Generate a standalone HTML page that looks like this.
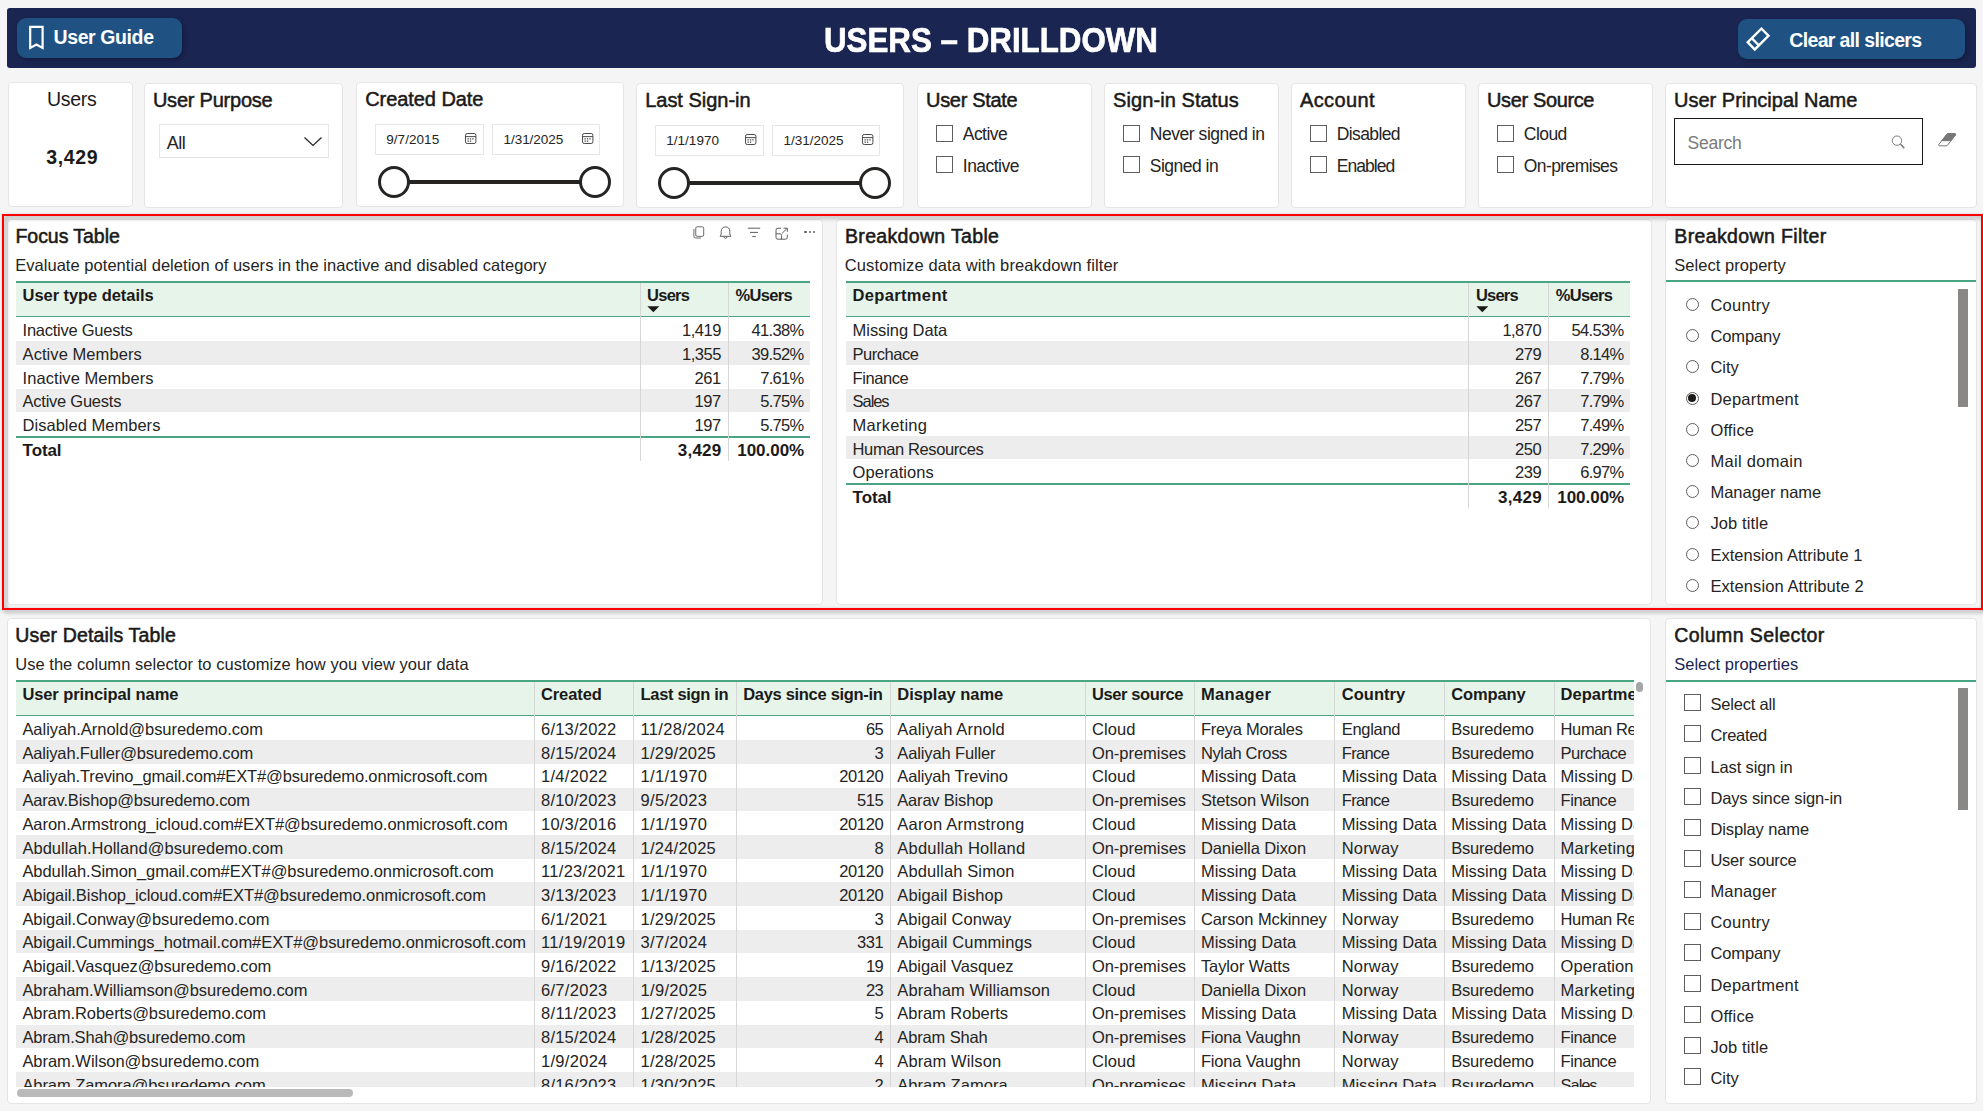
<!DOCTYPE html>
<html><head><meta charset="utf-8"><title>Users - Drilldown</title>
<style>
html,body{margin:0;padding:0;}
body{width:1983px;height:1111px;overflow:hidden;background:#f5f5f5;font-family:'Liberation Sans', sans-serif;position:relative;}
svg{position:absolute;overflow:visible;}
</style></head><body>
<div style="position:absolute;left:7px;top:8px;width:1969px;height:60px;background:#1a2552;border-radius:3px;"></div>
<div style="position:absolute;left:17px;top:18px;width:165px;height:40px;background:#1f5282;border-radius:9px;box-shadow:2px 2px 4px rgba(0,0,0,0.25);"></div>
<svg style="left:27px;top:24px" width="20" height="28" viewBox="0 0 20 28"><path d="M3.2 2.8 H15.6 V24 L9.4 20.6 L3.2 24 Z" fill="none" stroke="#fff" stroke-width="2.2" stroke-linejoin="miter"/></svg>
<div style="position:absolute;top:26px;font-size:19.5px;line-height:23.4px;font-weight:700;color:#fff;white-space:pre;letter-spacing:-0.394px;left:53.5px;">User Guide</div>
<div style="position:absolute;top:19px;font-size:35px;line-height:42.0px;font-weight:700;color:#fff;white-space:pre;letter-spacing:0.000px;left:490.80px;width:1000px;text-align:center;transform:scaleX(0.8946);transform-origin:center center;-webkit-text-stroke:0.7px #fff;">USERS – DRILLDOWN</div>
<div style="position:absolute;left:1738px;top:19px;width:226.5px;height:39.5px;background:#1f5282;border-radius:9px;box-shadow:2px 2px 4px rgba(0,0,0,0.25);"></div>
<svg style="left:0;top:0" width="1983" height="80"><g transform="translate(1758.1,39.05) rotate(45)" fill="none" stroke="#fff" stroke-width="2.4"><rect x="-5" y="-9.7" width="10" height="19.4"/><path d="M-5 3.9 H5"/></g></svg>
<div style="position:absolute;top:29px;font-size:19.5px;line-height:23.4px;font-weight:700;color:#fff;white-space:pre;letter-spacing:-0.632px;left:1789.2px;">Clear all slicers</div>
<div style="position:absolute;left:8px;top:82px;width:124.5px;height:124.5px;background:#fff;border:1px solid #e5e5e5;border-radius:4px;box-sizing:border-box;"></div>
<div style="position:absolute;top:88px;font-size:19.5px;line-height:23.4px;font-weight:400;color:#1b1a19;white-space:pre;letter-spacing:-0.280px;left:-428.24px;width:1000px;text-align:center;">Users</div>
<div style="position:absolute;top:146px;font-size:19.5px;line-height:23.4px;font-weight:700;color:#1b1a19;white-space:pre;letter-spacing:0.647px;left:-427.78px;width:1000px;text-align:center;">3,429</div>
<div style="position:absolute;left:144px;top:83px;width:199px;height:124.5px;background:#fff;border:1px solid #e5e5e5;border-radius:4px;box-sizing:border-box;"></div>
<div style="position:absolute;top:88px;font-size:20px;line-height:24.0px;font-weight:400;color:#1b1a19;white-space:pre;letter-spacing:-0.226px;left:152.9px;-webkit-text-stroke:0.5px #1b1a19;">User Purpose</div>
<div style="position:absolute;left:159px;top:124px;width:169.5px;height:33.5px;border:1px solid #e6e6e6;box-sizing:border-box;background:#fff;"></div>
<div style="position:absolute;top:133px;font-size:18px;line-height:21.6px;font-weight:400;color:#252423;white-space:pre;letter-spacing:-0.558px;left:166.8px;">All</div>
<svg style="left:303px;top:135px" width="20" height="12" viewBox="0 0 20 12"><path d="M1.5 2.5 L10 10.5 L18.5 2.5" fill="none" stroke="#252423" stroke-width="1.25"/></svg>
<div style="position:absolute;left:356px;top:82px;width:268px;height:124.5px;background:#fff;border:1px solid #e5e5e5;border-radius:4px;box-sizing:border-box;"></div>
<div style="position:absolute;top:87px;font-size:20px;line-height:24.0px;font-weight:400;color:#1b1a19;white-space:pre;letter-spacing:-0.061px;left:365.2px;-webkit-text-stroke:0.5px #1b1a19;">Created Date</div>
<div style="position:absolute;left:375px;top:123.5px;width:109px;height:31.5px;border:1px solid #e6e6e6;box-sizing:border-box;"></div>
<div style="position:absolute;left:492px;top:123.5px;width:108px;height:31.5px;border:1px solid #e6e6e6;box-sizing:border-box;"></div>
<div style="position:absolute;top:132px;font-size:13.5px;line-height:16.2px;font-weight:400;color:#252423;white-space:pre;letter-spacing:0.062px;left:386.2px;">9/7/2015</div>
<div style="position:absolute;top:132px;font-size:13.5px;line-height:16.2px;font-weight:400;color:#252423;white-space:pre;letter-spacing:-0.045px;left:503.5px;">1/31/2025</div>
<svg style="left:464.6px;top:133px" width="11.4" height="11" viewBox="0 0 11.4 11"><g fill="none" stroke="#4a4a4a" stroke-width="1"><rect x="0.5" y="0.5" width="10.4" height="10" rx="1.7"/><path d="M0.5 3.6 H10.9"/></g><g fill="#4a4a4a"><rect x="2.5" y="5.2" width="1.3" height="1.3"/><rect x="4.9" y="5.2" width="1.3" height="1.3"/><rect x="7.3" y="5.2" width="1.3" height="1.3"/><rect x="2.5" y="7.5" width="1.3" height="1.3"/><rect x="4.9" y="7.5" width="1.3" height="1.3"/></g></svg>
<svg style="left:581.8px;top:133px" width="11.4" height="11" viewBox="0 0 11.4 11"><g fill="none" stroke="#4a4a4a" stroke-width="1"><rect x="0.5" y="0.5" width="10.4" height="10" rx="1.7"/><path d="M0.5 3.6 H10.9"/></g><g fill="#4a4a4a"><rect x="2.5" y="5.2" width="1.3" height="1.3"/><rect x="4.9" y="5.2" width="1.3" height="1.3"/><rect x="7.3" y="5.2" width="1.3" height="1.3"/><rect x="2.5" y="7.5" width="1.3" height="1.3"/><rect x="4.9" y="7.5" width="1.3" height="1.3"/></g></svg>
<div style="position:absolute;left:393.8px;top:179.5px;width:201.2px;height:4px;background:#252423;"></div>
<div style="position:absolute;left:377.8px;top:165.5px;width:32px;height:32px;border:3.2px solid #252423;border-radius:50%;background:#fff;box-sizing:border-box;"></div>
<div style="position:absolute;left:579px;top:165.5px;width:32px;height:32px;border:3.2px solid #252423;border-radius:50%;background:#fff;box-sizing:border-box;"></div>
<div style="position:absolute;left:636px;top:83px;width:268px;height:124.5px;background:#fff;border:1px solid #e5e5e5;border-radius:4px;box-sizing:border-box;"></div>
<div style="position:absolute;top:88px;font-size:20px;line-height:24.0px;font-weight:400;color:#1b1a19;white-space:pre;letter-spacing:-0.020px;left:645.2px;-webkit-text-stroke:0.5px #1b1a19;">Last Sign-in</div>
<div style="position:absolute;left:655px;top:124.5px;width:109px;height:31.5px;border:1px solid #e6e6e6;box-sizing:border-box;"></div>
<div style="position:absolute;left:772px;top:124.5px;width:108px;height:31.5px;border:1px solid #e6e6e6;box-sizing:border-box;"></div>
<div style="position:absolute;top:133px;font-size:13.5px;line-height:16.2px;font-weight:400;color:#252423;white-space:pre;letter-spacing:0.034px;left:666.2px;">1/1/1970</div>
<div style="position:absolute;top:133px;font-size:13.5px;line-height:16.2px;font-weight:400;color:#252423;white-space:pre;letter-spacing:-0.008px;left:783.5px;">1/31/2025</div>
<svg style="left:744.6px;top:134px" width="11.4" height="11" viewBox="0 0 11.4 11"><g fill="none" stroke="#4a4a4a" stroke-width="1"><rect x="0.5" y="0.5" width="10.4" height="10" rx="1.7"/><path d="M0.5 3.6 H10.9"/></g><g fill="#4a4a4a"><rect x="2.5" y="5.2" width="1.3" height="1.3"/><rect x="4.9" y="5.2" width="1.3" height="1.3"/><rect x="7.3" y="5.2" width="1.3" height="1.3"/><rect x="2.5" y="7.5" width="1.3" height="1.3"/><rect x="4.9" y="7.5" width="1.3" height="1.3"/></g></svg>
<svg style="left:861.8px;top:134px" width="11.4" height="11" viewBox="0 0 11.4 11"><g fill="none" stroke="#4a4a4a" stroke-width="1"><rect x="0.5" y="0.5" width="10.4" height="10" rx="1.7"/><path d="M0.5 3.6 H10.9"/></g><g fill="#4a4a4a"><rect x="2.5" y="5.2" width="1.3" height="1.3"/><rect x="4.9" y="5.2" width="1.3" height="1.3"/><rect x="7.3" y="5.2" width="1.3" height="1.3"/><rect x="2.5" y="7.5" width="1.3" height="1.3"/><rect x="4.9" y="7.5" width="1.3" height="1.3"/></g></svg>
<div style="position:absolute;left:673.8px;top:180.5px;width:201.2px;height:4px;background:#252423;"></div>
<div style="position:absolute;left:657.8px;top:166.5px;width:32px;height:32px;border:3.2px solid #252423;border-radius:50%;background:#fff;box-sizing:border-box;"></div>
<div style="position:absolute;left:859px;top:166.5px;width:32px;height:32px;border:3.2px solid #252423;border-radius:50%;background:#fff;box-sizing:border-box;"></div>
<div style="position:absolute;left:917px;top:83px;width:174.5px;height:124.5px;background:#fff;border:1px solid #e5e5e5;border-radius:4px;box-sizing:border-box;"></div>
<div style="position:absolute;top:88px;font-size:20px;line-height:24.0px;font-weight:400;color:#1b1a19;white-space:pre;letter-spacing:-0.309px;left:926px;-webkit-text-stroke:0.5px #1b1a19;">User State</div>
<div style="position:absolute;left:935.5px;top:125px;width:17px;height:17px;border:1px solid #605e5c;box-sizing:border-box;background:#fff;"></div>
<div style="position:absolute;top:124px;font-size:17.5px;line-height:21.0px;font-weight:400;color:#252423;white-space:pre;letter-spacing:-0.551px;left:962.8px;">Active</div>
<div style="position:absolute;left:935.5px;top:156px;width:17px;height:17px;border:1px solid #605e5c;box-sizing:border-box;background:#fff;"></div>
<div style="position:absolute;top:156px;font-size:17.5px;line-height:21.0px;font-weight:400;color:#252423;white-space:pre;letter-spacing:-0.530px;left:962.8px;">Inactive</div>
<div style="position:absolute;left:1104px;top:83px;width:174.5px;height:124.5px;background:#fff;border:1px solid #e5e5e5;border-radius:4px;box-sizing:border-box;"></div>
<div style="position:absolute;top:88px;font-size:20px;line-height:24.0px;font-weight:400;color:#1b1a19;white-space:pre;letter-spacing:0.091px;left:1113px;-webkit-text-stroke:0.5px #1b1a19;">Sign-in Status</div>
<div style="position:absolute;left:1122.5px;top:125px;width:17px;height:17px;border:1px solid #605e5c;box-sizing:border-box;background:#fff;"></div>
<div style="position:absolute;top:124px;font-size:17.5px;line-height:21.0px;font-weight:400;color:#252423;white-space:pre;letter-spacing:-0.458px;left:1149.8px;">Never signed in</div>
<div style="position:absolute;left:1122.5px;top:156px;width:17px;height:17px;border:1px solid #605e5c;box-sizing:border-box;background:#fff;"></div>
<div style="position:absolute;top:156px;font-size:17.5px;line-height:21.0px;font-weight:400;color:#252423;white-space:pre;letter-spacing:-0.511px;left:1149.8px;">Signed in</div>
<div style="position:absolute;left:1291px;top:83px;width:174.5px;height:124.5px;background:#fff;border:1px solid #e5e5e5;border-radius:4px;box-sizing:border-box;"></div>
<div style="position:absolute;top:88px;font-size:20px;line-height:24.0px;font-weight:400;color:#1b1a19;white-space:pre;letter-spacing:0.372px;left:1300px;-webkit-text-stroke:0.5px #1b1a19;">Account</div>
<div style="position:absolute;left:1309.5px;top:125px;width:17px;height:17px;border:1px solid #605e5c;box-sizing:border-box;background:#fff;"></div>
<div style="position:absolute;top:124px;font-size:17.5px;line-height:21.0px;font-weight:400;color:#252423;white-space:pre;letter-spacing:-0.616px;left:1336.8px;">Disabled</div>
<div style="position:absolute;left:1309.5px;top:156px;width:17px;height:17px;border:1px solid #605e5c;box-sizing:border-box;background:#fff;"></div>
<div style="position:absolute;top:156px;font-size:17.5px;line-height:21.0px;font-weight:400;color:#252423;white-space:pre;letter-spacing:-0.956px;left:1336.8px;">Enabled</div>
<div style="position:absolute;left:1478px;top:83px;width:174.5px;height:124.5px;background:#fff;border:1px solid #e5e5e5;border-radius:4px;box-sizing:border-box;"></div>
<div style="position:absolute;top:88px;font-size:20px;line-height:24.0px;font-weight:400;color:#1b1a19;white-space:pre;letter-spacing:-0.366px;left:1487px;-webkit-text-stroke:0.5px #1b1a19;">User Source</div>
<div style="position:absolute;left:1496.5px;top:125px;width:17px;height:17px;border:1px solid #605e5c;box-sizing:border-box;background:#fff;"></div>
<div style="position:absolute;top:124px;font-size:17.5px;line-height:21.0px;font-weight:400;color:#252423;white-space:pre;letter-spacing:-0.559px;left:1523.8px;">Cloud</div>
<div style="position:absolute;left:1496.5px;top:156px;width:17px;height:17px;border:1px solid #605e5c;box-sizing:border-box;background:#fff;"></div>
<div style="position:absolute;top:156px;font-size:17.5px;line-height:21.0px;font-weight:400;color:#252423;white-space:pre;letter-spacing:-0.597px;left:1523.8px;">On-premises</div>
<div style="position:absolute;left:1665px;top:83px;width:311.5px;height:124.5px;background:#fff;border:1px solid #e5e5e5;border-radius:4px;box-sizing:border-box;"></div>
<div style="position:absolute;top:88px;font-size:20px;line-height:24.0px;font-weight:400;color:#1b1a19;white-space:pre;letter-spacing:0.001px;left:1674px;-webkit-text-stroke:0.5px #1b1a19;">User Principal Name</div>
<div style="position:absolute;left:1674px;top:118px;width:249.3px;height:47px;border:1.5px solid #1b1a19;box-sizing:border-box;background:#fff;"></div>
<div style="position:absolute;top:133px;font-size:17.5px;line-height:21.0px;font-weight:400;color:#7a7a7a;white-space:pre;letter-spacing:-0.251px;left:1687.5px;">Search</div>
<svg style="left:0;top:0" width="1983" height="200"><g fill="none" stroke="#777"><circle cx="1897" cy="140.65" r="4.7" stroke-width="0.95"/><path d="M1900.5 144.3 L1904.3 148.3" stroke-width="1.5"/></g><path d="M1947.4 133.7 H1955.1 Q1956.1 134 1955.4 135 L1947 145.8 H1939.2 Q1938.1 145.4 1938.9 144.4 Z" fill="#fff" stroke="#777" stroke-width="1" stroke-linejoin="round"/><path d="M1947.4 133.7 H1955.1 Q1956.1 134 1955.4 135 L1951 140.65 H1941.8 Z" fill="#777" stroke="#777" stroke-width="1" stroke-linejoin="round"/></svg>
<div style="position:absolute;left:6.5px;top:219px;width:816px;height:386px;background:#fff;border:1px solid #e5e5e5;border-radius:4px;box-sizing:border-box;"></div>
<div style="position:absolute;top:225px;font-size:19.5px;line-height:23.4px;font-weight:400;color:#1b1a19;white-space:pre;letter-spacing:-0.050px;left:15.5px;-webkit-text-stroke:0.55px #1b1a19;">Focus Table</div>
<div style="position:absolute;top:256px;font-size:16.5px;line-height:19.8px;font-weight:400;color:#252423;white-space:pre;letter-spacing:0.039px;left:15.2px;">Evaluate potential deletion of users in the inactive and disabled category</div>
<div style="position:absolute;left:16px;top:281px;width:794px;height:36.3px;background:#e6f4ea;border-top:2px solid #4aa682;border-bottom:1.5px solid #4aa682;box-sizing:border-box;"></div>
<div style="position:absolute;top:286px;font-size:16.5px;line-height:19.8px;font-weight:700;color:#1b1a19;white-space:pre;letter-spacing:-0.066px;left:22.6px;">User type details</div>
<div style="position:absolute;top:286px;font-size:16.5px;line-height:19.8px;font-weight:700;color:#1b1a19;white-space:pre;letter-spacing:-0.769px;left:647.1px;">Users</div>
<div style="position:absolute;top:286px;font-size:16.5px;line-height:19.8px;font-weight:700;color:#1b1a19;white-space:pre;letter-spacing:-0.669px;left:735.4px;">%Users</div>
<svg style="left:646.7px;top:306px" width="13" height="7" viewBox="0 0 13 7"><path d="M0.3 0.3 H12.3 L6.3 6.3 Z" fill="#1b1a19"/></svg>
<div style="position:absolute;top:321px;font-size:16.5px;line-height:19.8px;font-weight:400;color:#252423;white-space:pre;letter-spacing:-0.252px;left:22.6px;">Inactive Guests</div>
<div style="position:absolute;top:321px;font-size:16.5px;line-height:19.8px;font-weight:400;color:#252423;white-space:pre;letter-spacing:-0.524px;left:-79.22px;width:800px;text-align:right;">1,419</div>
<div style="position:absolute;top:321px;font-size:16.5px;line-height:19.8px;font-weight:400;color:#252423;white-space:pre;letter-spacing:-0.634px;left:3.57px;width:800px;text-align:right;">41.38%</div>
<div style="position:absolute;left:16px;top:341.2px;width:794px;height:23.4px;background:#ededed;"></div>
<div style="position:absolute;top:345px;font-size:16.5px;line-height:19.8px;font-weight:400;color:#252423;white-space:pre;letter-spacing:0.063px;left:22.6px;">Active Members</div>
<div style="position:absolute;top:345px;font-size:16.5px;line-height:19.8px;font-weight:400;color:#252423;white-space:pre;letter-spacing:-0.524px;left:-79.22px;width:800px;text-align:right;">1,355</div>
<div style="position:absolute;top:345px;font-size:16.5px;line-height:19.8px;font-weight:400;color:#252423;white-space:pre;letter-spacing:-0.634px;left:3.57px;width:800px;text-align:right;">39.52%</div>
<div style="position:absolute;top:369px;font-size:16.5px;line-height:19.8px;font-weight:400;color:#252423;white-space:pre;letter-spacing:0.052px;left:22.6px;">Inactive Members</div>
<div style="position:absolute;top:369px;font-size:16.5px;line-height:19.8px;font-weight:400;color:#252423;white-space:pre;letter-spacing:-0.416px;left:-79.12px;width:800px;text-align:right;">261</div>
<div style="position:absolute;top:369px;font-size:16.5px;line-height:19.8px;font-weight:400;color:#252423;white-space:pre;letter-spacing:-0.724px;left:3.48px;width:800px;text-align:right;">7.61%</div>
<div style="position:absolute;left:16px;top:388.6px;width:794px;height:23.4px;background:#ededed;"></div>
<div style="position:absolute;top:392px;font-size:16.5px;line-height:19.8px;font-weight:400;color:#252423;white-space:pre;letter-spacing:-0.250px;left:22.6px;">Active Guests</div>
<div style="position:absolute;top:392px;font-size:16.5px;line-height:19.8px;font-weight:400;color:#252423;white-space:pre;letter-spacing:-0.416px;left:-79.12px;width:800px;text-align:right;">197</div>
<div style="position:absolute;top:392px;font-size:16.5px;line-height:19.8px;font-weight:400;color:#252423;white-space:pre;letter-spacing:-0.724px;left:3.48px;width:800px;text-align:right;">5.75%</div>
<div style="position:absolute;top:416px;font-size:16.5px;line-height:19.8px;font-weight:400;color:#252423;white-space:pre;letter-spacing:0.016px;left:22.6px;">Disabled Members</div>
<div style="position:absolute;top:416px;font-size:16.5px;line-height:19.8px;font-weight:400;color:#252423;white-space:pre;letter-spacing:-0.416px;left:-79.12px;width:800px;text-align:right;">197</div>
<div style="position:absolute;top:416px;font-size:16.5px;line-height:19.8px;font-weight:400;color:#252423;white-space:pre;letter-spacing:-0.724px;left:3.48px;width:800px;text-align:right;">5.75%</div>
<div style="position:absolute;left:16px;top:436px;width:794px;height:2px;background:#4aa682;"></div>
<div style="position:absolute;top:441px;font-size:17.0px;line-height:20.4px;font-weight:700;color:#1b1a19;white-space:pre;letter-spacing:-0.090px;left:22.6px;">Total</div>
<div style="position:absolute;top:441px;font-size:17.0px;line-height:20.4px;font-weight:700;color:#1b1a19;white-space:pre;letter-spacing:0.263px;left:-78.44px;width:800px;text-align:right;">3,429</div>
<div style="position:absolute;top:441px;font-size:17.0px;line-height:20.4px;font-weight:700;color:#1b1a19;white-space:pre;letter-spacing:-0.021px;left:4.18px;width:800px;text-align:right;">100.00%</div>
<div style="position:absolute;left:639.5px;top:283px;width:1px;height:177.5px;background:#d6d6d6;"></div>
<div style="position:absolute;left:728px;top:283px;width:1px;height:177.5px;background:#d6d6d6;"></div>
<svg style="left:692.5px;top:226px" width="12" height="13" viewBox="0 0 13 14"><g fill="none" stroke="#605e5c" stroke-width="1"><rect x="3" y="0.8" width="8.6" height="10.4" rx="1.6"/><path d="M1 3.2 V11 Q1 13 3 13 H8.6"/></g></svg>
<svg style="left:719px;top:226px" width="13" height="14" viewBox="0 0 13 14"><g fill="none" stroke="#605e5c" stroke-width="1"><path d="M1 10.3 C2.4 9 2.2 7.2 2.2 5.4 C2.2 2.6 4 0.9 6.5 0.9 C9 0.9 10.8 2.6 10.8 5.4 C10.8 7.2 10.6 9 12 10.3 Z"/><path d="M5 10.6 A1.5 1.7 0 0 0 8 10.6"/></g></svg>
<svg style="left:747px;top:226.5px" width="14" height="11" viewBox="0 0 14 11"><g fill="none" stroke="#605e5c" stroke-width="1"><path d="M0.8 1.2 H13.2"/><path d="M3 5.4 H11"/><path d="M5.2 9.6 H8.8"/></g></svg>
<svg style="left:775px;top:226.8px" width="14" height="13" viewBox="0 0 14 13"><g fill="none" stroke="#605e5c" stroke-width="1"><path d="M6 1.2 H3 Q1 1.2 1 3.2 V10.4 Q1 12.2 3 12.2 H10.5 Q12.3 12.2 12.3 10.4 V7.6"/><path d="M1 6.8 H5 Q6.6 6.8 6.6 8.4 V12.2"/><path d="M7 6.4 L12.3 1.2 M8.6 1.2 H12.3 V4.8"/></g></svg>
<div style="position:absolute;left:804.4px;top:231px;width:2.4px;height:2.4px;background:#605e5c;border-radius:50%;"></div>
<div style="position:absolute;left:808.6px;top:231px;width:2.4px;height:2.4px;background:#605e5c;border-radius:50%;"></div>
<div style="position:absolute;left:812.8px;top:231px;width:2.4px;height:2.4px;background:#605e5c;border-radius:50%;"></div>
<div style="position:absolute;left:836px;top:219px;width:815.5px;height:386px;background:#fff;border:1px solid #e5e5e5;border-radius:4px;box-sizing:border-box;"></div>
<div style="position:absolute;top:225px;font-size:19.5px;line-height:23.4px;font-weight:400;color:#1b1a19;white-space:pre;letter-spacing:0.332px;left:845px;-webkit-text-stroke:0.55px #1b1a19;">Breakdown Table</div>
<div style="position:absolute;top:256px;font-size:16.5px;line-height:19.8px;font-weight:400;color:#252423;white-space:pre;letter-spacing:0.108px;left:844.8px;">Customize data with breakdown filter</div>
<div style="position:absolute;left:846px;top:281px;width:784px;height:36.3px;background:#e6f4ea;border-top:2px solid #4aa682;border-bottom:1.5px solid #4aa682;box-sizing:border-box;"></div>
<div style="position:absolute;top:286px;font-size:16.5px;line-height:19.8px;font-weight:700;color:#1b1a19;white-space:pre;letter-spacing:0.335px;left:852.6px;">Department</div>
<div style="position:absolute;top:286px;font-size:16.5px;line-height:19.8px;font-weight:700;color:#1b1a19;white-space:pre;letter-spacing:-0.769px;left:1475.8999999999999px;">Users</div>
<div style="position:absolute;top:286px;font-size:16.5px;line-height:19.8px;font-weight:700;color:#1b1a19;white-space:pre;letter-spacing:-0.669px;left:1555.7px;">%Users</div>
<svg style="left:1475.5px;top:306px" width="13" height="7" viewBox="0 0 13 7"><path d="M0.3 0.3 H12.3 L6.3 6.3 Z" fill="#1b1a19"/></svg>
<div style="position:absolute;top:321px;font-size:16.5px;line-height:19.8px;font-weight:400;color:#252423;white-space:pre;letter-spacing:-0.061px;left:852.6px;">Missing Data</div>
<div style="position:absolute;top:321px;font-size:16.5px;line-height:19.8px;font-weight:400;color:#252423;white-space:pre;letter-spacing:-0.524px;left:741.08px;width:800px;text-align:right;">1,870</div>
<div style="position:absolute;top:321px;font-size:16.5px;line-height:19.8px;font-weight:400;color:#252423;white-space:pre;letter-spacing:-0.634px;left:823.57px;width:800px;text-align:right;">54.53%</div>
<div style="position:absolute;left:846px;top:341.2px;width:784px;height:23.4px;background:#ededed;"></div>
<div style="position:absolute;top:345px;font-size:16.5px;line-height:19.8px;font-weight:400;color:#252423;white-space:pre;letter-spacing:-0.488px;left:852.6px;">Purchace</div>
<div style="position:absolute;top:345px;font-size:16.5px;line-height:19.8px;font-weight:400;color:#252423;white-space:pre;letter-spacing:-0.416px;left:741.18px;width:800px;text-align:right;">279</div>
<div style="position:absolute;top:345px;font-size:16.5px;line-height:19.8px;font-weight:400;color:#252423;white-space:pre;letter-spacing:-0.724px;left:823.48px;width:800px;text-align:right;">8.14%</div>
<div style="position:absolute;top:369px;font-size:16.5px;line-height:19.8px;font-weight:400;color:#252423;white-space:pre;letter-spacing:-0.434px;left:852.6px;">Finance</div>
<div style="position:absolute;top:369px;font-size:16.5px;line-height:19.8px;font-weight:400;color:#252423;white-space:pre;letter-spacing:-0.416px;left:741.18px;width:800px;text-align:right;">267</div>
<div style="position:absolute;top:369px;font-size:16.5px;line-height:19.8px;font-weight:400;color:#252423;white-space:pre;letter-spacing:-0.724px;left:823.48px;width:800px;text-align:right;">7.79%</div>
<div style="position:absolute;left:846px;top:388.6px;width:784px;height:23.4px;background:#ededed;"></div>
<div style="position:absolute;top:392px;font-size:16.5px;line-height:19.8px;font-weight:400;color:#252423;white-space:pre;letter-spacing:-1.070px;left:852.6px;">Sales</div>
<div style="position:absolute;top:392px;font-size:16.5px;line-height:19.8px;font-weight:400;color:#252423;white-space:pre;letter-spacing:-0.416px;left:741.18px;width:800px;text-align:right;">267</div>
<div style="position:absolute;top:392px;font-size:16.5px;line-height:19.8px;font-weight:400;color:#252423;white-space:pre;letter-spacing:-0.724px;left:823.48px;width:800px;text-align:right;">7.79%</div>
<div style="position:absolute;top:416px;font-size:16.5px;line-height:19.8px;font-weight:400;color:#252423;white-space:pre;letter-spacing:0.231px;left:852.6px;">Marketing</div>
<div style="position:absolute;top:416px;font-size:16.5px;line-height:19.8px;font-weight:400;color:#252423;white-space:pre;letter-spacing:-0.416px;left:741.18px;width:800px;text-align:right;">257</div>
<div style="position:absolute;top:416px;font-size:16.5px;line-height:19.8px;font-weight:400;color:#252423;white-space:pre;letter-spacing:-0.724px;left:823.48px;width:800px;text-align:right;">7.49%</div>
<div style="position:absolute;left:846px;top:436.0px;width:784px;height:23.4px;background:#ededed;"></div>
<div style="position:absolute;top:440px;font-size:16.5px;line-height:19.8px;font-weight:400;color:#252423;white-space:pre;letter-spacing:-0.396px;left:852.6px;">Human Resources</div>
<div style="position:absolute;top:440px;font-size:16.5px;line-height:19.8px;font-weight:400;color:#252423;white-space:pre;letter-spacing:-0.416px;left:741.18px;width:800px;text-align:right;">250</div>
<div style="position:absolute;top:440px;font-size:16.5px;line-height:19.8px;font-weight:400;color:#252423;white-space:pre;letter-spacing:-0.724px;left:823.48px;width:800px;text-align:right;">7.29%</div>
<div style="position:absolute;top:463px;font-size:16.5px;line-height:19.8px;font-weight:400;color:#252423;white-space:pre;letter-spacing:0.042px;left:852.6px;">Operations</div>
<div style="position:absolute;top:463px;font-size:16.5px;line-height:19.8px;font-weight:400;color:#252423;white-space:pre;letter-spacing:-0.416px;left:741.18px;width:800px;text-align:right;">239</div>
<div style="position:absolute;top:463px;font-size:16.5px;line-height:19.8px;font-weight:400;color:#252423;white-space:pre;letter-spacing:-0.724px;left:823.48px;width:800px;text-align:right;">6.97%</div>
<div style="position:absolute;left:846px;top:483px;width:784px;height:2px;background:#4aa682;"></div>
<div style="position:absolute;top:488px;font-size:17.0px;line-height:20.4px;font-weight:700;color:#1b1a19;white-space:pre;letter-spacing:-0.090px;left:852.6px;">Total</div>
<div style="position:absolute;top:488px;font-size:17.0px;line-height:20.4px;font-weight:700;color:#1b1a19;white-space:pre;letter-spacing:0.263px;left:741.86px;width:800px;text-align:right;">3,429</div>
<div style="position:absolute;top:488px;font-size:17.0px;line-height:20.4px;font-weight:700;color:#1b1a19;white-space:pre;letter-spacing:-0.021px;left:824.18px;width:800px;text-align:right;">100.00%</div>
<div style="position:absolute;left:1468.3px;top:283px;width:1px;height:224.89999999999998px;background:#d6d6d6;"></div>
<div style="position:absolute;left:1548.3px;top:283px;width:1px;height:224.89999999999998px;background:#d6d6d6;"></div>
<div style="position:absolute;left:1665px;top:219px;width:311.5px;height:386px;background:#fff;border:1px solid #e5e5e5;border-radius:4px;box-sizing:border-box;"></div>
<div style="position:absolute;top:225px;font-size:19.5px;line-height:23.4px;font-weight:400;color:#1b1a19;white-space:pre;letter-spacing:0.373px;left:1674.3px;-webkit-text-stroke:0.55px #1b1a19;">Breakdown Filter</div>
<div style="position:absolute;top:256px;font-size:16.5px;line-height:19.8px;font-weight:400;color:#252423;white-space:pre;letter-spacing:0.044px;left:1674.2px;">Select property</div>
<div style="position:absolute;left:1666px;top:280.4px;width:309.5px;height:2px;background:#4aa682;"></div>
<div style="position:absolute;left:1685.7px;top:297.9px;width:13px;height:13px;border:1px solid #605e5c;border-radius:50%;box-sizing:border-box;background:#fff;"></div>
<div style="position:absolute;top:296px;font-size:16.5px;line-height:19.8px;font-weight:400;color:#252423;white-space:pre;letter-spacing:0.270px;left:1710.4px;">Country</div>
<div style="position:absolute;left:1685.7px;top:329.12px;width:13px;height:13px;border:1px solid #605e5c;border-radius:50%;box-sizing:border-box;background:#fff;"></div>
<div style="position:absolute;top:327px;font-size:16.5px;line-height:19.8px;font-weight:400;color:#252423;white-space:pre;letter-spacing:-0.104px;left:1710.4px;">Company</div>
<div style="position:absolute;left:1685.7px;top:360.34px;width:13px;height:13px;border:1px solid #605e5c;border-radius:50%;box-sizing:border-box;background:#fff;"></div>
<div style="position:absolute;top:358px;font-size:16.5px;line-height:19.8px;font-weight:400;color:#252423;white-space:pre;letter-spacing:-0.007px;left:1710.4px;">City</div>
<div style="position:absolute;left:1685.7px;top:391.55999999999995px;width:13px;height:13px;border:1px solid #605e5c;border-radius:50%;box-sizing:border-box;background:#fff;"></div>
<div style="position:absolute;left:1688.0px;top:393.85999999999996px;width:8.4px;height:8.4px;background:#1b1a19;border-radius:50%;"></div>
<div style="position:absolute;top:390px;font-size:16.5px;line-height:19.8px;font-weight:400;color:#252423;white-space:pre;letter-spacing:0.220px;left:1710.4px;">Department</div>
<div style="position:absolute;left:1685.7px;top:422.78px;width:13px;height:13px;border:1px solid #605e5c;border-radius:50%;box-sizing:border-box;background:#fff;"></div>
<div style="position:absolute;top:421px;font-size:16.5px;line-height:19.8px;font-weight:400;color:#252423;white-space:pre;letter-spacing:0.161px;left:1710.4px;">Office</div>
<div style="position:absolute;left:1685.7px;top:454.0px;width:13px;height:13px;border:1px solid #605e5c;border-radius:50%;box-sizing:border-box;background:#fff;"></div>
<div style="position:absolute;top:452px;font-size:16.5px;line-height:19.8px;font-weight:400;color:#252423;white-space:pre;letter-spacing:0.303px;left:1710.4px;">Mail domain</div>
<div style="position:absolute;left:1685.7px;top:485.21999999999997px;width:13px;height:13px;border:1px solid #605e5c;border-radius:50%;box-sizing:border-box;background:#fff;"></div>
<div style="position:absolute;top:483px;font-size:16.5px;line-height:19.8px;font-weight:400;color:#252423;white-space:pre;letter-spacing:-0.008px;left:1710.4px;">Manager name</div>
<div style="position:absolute;left:1685.7px;top:516.4399999999999px;width:13px;height:13px;border:1px solid #605e5c;border-radius:50%;box-sizing:border-box;background:#fff;"></div>
<div style="position:absolute;top:514px;font-size:16.5px;line-height:19.8px;font-weight:400;color:#252423;white-space:pre;letter-spacing:0.128px;left:1710.4px;">Job title</div>
<div style="position:absolute;left:1685.7px;top:547.66px;width:13px;height:13px;border:1px solid #605e5c;border-radius:50%;box-sizing:border-box;background:#fff;"></div>
<div style="position:absolute;top:546px;font-size:16.5px;line-height:19.8px;font-weight:400;color:#252423;white-space:pre;letter-spacing:0.037px;left:1710.4px;">Extension Attribute 1</div>
<div style="position:absolute;left:1685.7px;top:578.88px;width:13px;height:13px;border:1px solid #605e5c;border-radius:50%;box-sizing:border-box;background:#fff;"></div>
<div style="position:absolute;top:577px;font-size:16.5px;line-height:19.8px;font-weight:400;color:#252423;white-space:pre;letter-spacing:0.092px;left:1710.4px;">Extension Attribute 2</div>
<div style="position:absolute;left:1958.3px;top:289px;width:9.6px;height:118px;background:#8a8886;"></div>
<div style="position:absolute;left:7px;top:618px;width:1643.5px;height:486px;background:#fff;border:1px solid #e5e5e5;border-radius:4px;box-sizing:border-box;"></div>
<div style="position:absolute;top:624px;font-size:19.5px;line-height:23.4px;font-weight:400;color:#1b1a19;white-space:pre;letter-spacing:0.159px;left:15.3px;-webkit-text-stroke:0.55px #1b1a19;">User Details Table</div>
<div style="position:absolute;top:655px;font-size:16.5px;line-height:19.8px;font-weight:400;color:#252423;white-space:pre;letter-spacing:0.038px;left:15.2px;">Use the column selector to customize how you view your data</div>
<div style="position:absolute;left:0;top:0;width:1634px;height:1086.6px;overflow:hidden;">
<div style="position:absolute;left:16px;top:680px;width:1618px;height:36.3px;background:#e6f4ea;border-top:2px solid #4aa682;border-bottom:1.5px solid #4aa682;box-sizing:border-box;"></div>
<div style="position:absolute;top:685px;font-size:16.5px;line-height:19.8px;font-weight:700;color:#1b1a19;white-space:pre;letter-spacing:-0.096px;left:22.4px;">User principal name</div>
<div style="position:absolute;top:685px;font-size:16.5px;line-height:19.8px;font-weight:700;color:#1b1a19;white-space:pre;letter-spacing:-0.109px;left:541px;">Created</div>
<div style="position:absolute;top:685px;font-size:16.5px;line-height:19.8px;font-weight:700;color:#1b1a19;white-space:pre;letter-spacing:-0.335px;left:640.6px;">Last sign in</div>
<div style="position:absolute;top:685px;font-size:16.5px;line-height:19.8px;font-weight:700;color:#1b1a19;white-space:pre;letter-spacing:-0.305px;left:743.2px;">Days since sign-in</div>
<div style="position:absolute;top:685px;font-size:16.5px;line-height:19.8px;font-weight:700;color:#1b1a19;white-space:pre;letter-spacing:-0.045px;left:897.3px;">Display name</div>
<div style="position:absolute;top:685px;font-size:16.5px;line-height:19.8px;font-weight:700;color:#1b1a19;white-space:pre;letter-spacing:-0.379px;left:1091.9px;">User source</div>
<div style="position:absolute;top:685px;font-size:16.5px;line-height:19.8px;font-weight:700;color:#1b1a19;white-space:pre;letter-spacing:0.357px;left:1200.9px;">Manager</div>
<div style="position:absolute;top:685px;font-size:16.5px;line-height:19.8px;font-weight:700;color:#1b1a19;white-space:pre;letter-spacing:0.042px;left:1341.7px;">Country</div>
<div style="position:absolute;top:685px;font-size:16.5px;line-height:19.8px;font-weight:700;color:#1b1a19;white-space:pre;letter-spacing:-0.098px;left:1451.2px;">Company</div>
<div style="position:absolute;top:685px;font-size:16.5px;line-height:19.8px;font-weight:700;color:#1b1a19;white-space:pre;letter-spacing:0.000px;left:1560.6px;">Department</div>
<div style="position:absolute;top:720px;font-size:16.5px;line-height:19.8px;font-weight:400;color:#252423;white-space:pre;letter-spacing:-0.035px;left:22.4px;">Aaliyah.Arnold@bsuredemo.com</div>
<div style="position:absolute;top:720px;font-size:16.5px;line-height:19.8px;font-weight:400;color:#252423;white-space:pre;letter-spacing:0.224px;left:541px;">6/13/2022</div>
<div style="position:absolute;top:720px;font-size:16.5px;line-height:19.8px;font-weight:400;color:#252423;white-space:pre;letter-spacing:0.305px;left:640.6px;">11/28/2024</div>
<div style="position:absolute;top:720px;font-size:16.5px;line-height:19.8px;font-weight:400;color:#252423;white-space:pre;letter-spacing:-0.559px;left:83.14px;width:800px;text-align:right;">65</div>
<div style="position:absolute;top:720px;font-size:16.5px;line-height:19.8px;font-weight:400;color:#252423;white-space:pre;letter-spacing:0.154px;left:897.3px;">Aaliyah Arnold</div>
<div style="position:absolute;top:720px;font-size:16.5px;line-height:19.8px;font-weight:400;color:#252423;white-space:pre;letter-spacing:0.119px;left:1091.9px;">Cloud</div>
<div style="position:absolute;top:720px;font-size:16.5px;line-height:19.8px;font-weight:400;color:#252423;white-space:pre;letter-spacing:-0.288px;left:1200.9px;">Freya Morales</div>
<div style="position:absolute;top:720px;font-size:16.5px;line-height:19.8px;font-weight:400;color:#252423;white-space:pre;letter-spacing:-0.294px;left:1341.7px;">England</div>
<div style="position:absolute;top:720px;font-size:16.5px;line-height:19.8px;font-weight:400;color:#252423;white-space:pre;letter-spacing:-0.211px;left:1451.2px;">Bsuredemo</div>
<div style="position:absolute;top:720px;font-size:16.5px;line-height:19.8px;font-weight:400;color:#252423;white-space:pre;letter-spacing:-0.396px;left:1560.6px;">Human Resources</div>
<div style="position:absolute;left:16px;top:740.2px;width:1618px;height:23.5px;background:#ededed;"></div>
<div style="position:absolute;top:744px;font-size:16.5px;line-height:19.8px;font-weight:400;color:#252423;white-space:pre;letter-spacing:-0.156px;left:22.4px;">Aaliyah.Fuller@bsuredemo.com</div>
<div style="position:absolute;top:744px;font-size:16.5px;line-height:19.8px;font-weight:400;color:#252423;white-space:pre;letter-spacing:0.224px;left:541px;">8/15/2024</div>
<div style="position:absolute;top:744px;font-size:16.5px;line-height:19.8px;font-weight:400;color:#252423;white-space:pre;letter-spacing:0.224px;left:640.6px;">1/29/2025</div>
<div style="position:absolute;top:744px;font-size:16.5px;line-height:19.8px;font-weight:400;color:#252423;white-space:pre;letter-spacing:-0.287px;left:83.41px;width:800px;text-align:right;">3</div>
<div style="position:absolute;top:744px;font-size:16.5px;line-height:19.8px;font-weight:400;color:#252423;white-space:pre;letter-spacing:-0.128px;left:897.3px;">Aaliyah Fuller</div>
<div style="position:absolute;top:744px;font-size:16.5px;line-height:19.8px;font-weight:400;color:#252423;white-space:pre;letter-spacing:-0.025px;left:1091.9px;">On-premises</div>
<div style="position:absolute;top:744px;font-size:16.5px;line-height:19.8px;font-weight:400;color:#252423;white-space:pre;letter-spacing:-0.346px;left:1200.9px;">Nylah Cross</div>
<div style="position:absolute;top:744px;font-size:16.5px;line-height:19.8px;font-weight:400;color:#252423;white-space:pre;letter-spacing:-0.632px;left:1341.7px;">France</div>
<div style="position:absolute;top:744px;font-size:16.5px;line-height:19.8px;font-weight:400;color:#252423;white-space:pre;letter-spacing:-0.211px;left:1451.2px;">Bsuredemo</div>
<div style="position:absolute;top:744px;font-size:16.5px;line-height:19.8px;font-weight:400;color:#252423;white-space:pre;letter-spacing:-0.517px;left:1560.6px;">Purchace</div>
<div style="position:absolute;top:767px;font-size:16.5px;line-height:19.8px;font-weight:400;color:#252423;white-space:pre;letter-spacing:-0.142px;left:22.4px;">Aaliyah.Trevino_gmail.com#EXT#@bsuredemo.onmicrosoft.com</div>
<div style="position:absolute;top:767px;font-size:16.5px;line-height:19.8px;font-weight:400;color:#252423;white-space:pre;letter-spacing:0.295px;left:541px;">1/4/2022</div>
<div style="position:absolute;top:767px;font-size:16.5px;line-height:19.8px;font-weight:400;color:#252423;white-space:pre;letter-spacing:0.295px;left:640.6px;">1/1/1970</div>
<div style="position:absolute;top:767px;font-size:16.5px;line-height:19.8px;font-weight:400;color:#252423;white-space:pre;letter-spacing:-0.348px;left:83.35px;width:800px;text-align:right;">20120</div>
<div style="position:absolute;top:767px;font-size:16.5px;line-height:19.8px;font-weight:400;color:#252423;white-space:pre;letter-spacing:-0.151px;left:897.3px;">Aaliyah Trevino</div>
<div style="position:absolute;top:767px;font-size:16.5px;line-height:19.8px;font-weight:400;color:#252423;white-space:pre;letter-spacing:0.119px;left:1091.9px;">Cloud</div>
<div style="position:absolute;top:767px;font-size:16.5px;line-height:19.8px;font-weight:400;color:#252423;white-space:pre;letter-spacing:-0.007px;left:1200.9px;">Missing Data</div>
<div style="position:absolute;top:767px;font-size:16.5px;line-height:19.8px;font-weight:400;color:#252423;white-space:pre;letter-spacing:-0.007px;left:1341.7px;">Missing Data</div>
<div style="position:absolute;top:767px;font-size:16.5px;line-height:19.8px;font-weight:400;color:#252423;white-space:pre;letter-spacing:-0.007px;left:1451.2px;">Missing Data</div>
<div style="position:absolute;top:767px;font-size:16.5px;line-height:19.8px;font-weight:400;color:#252423;white-space:pre;letter-spacing:-0.007px;left:1560.6px;">Missing Data</div>
<div style="position:absolute;left:16px;top:787.6px;width:1618px;height:23.5px;background:#ededed;"></div>
<div style="position:absolute;top:791px;font-size:16.5px;line-height:19.8px;font-weight:400;color:#252423;white-space:pre;letter-spacing:-0.175px;left:22.4px;">Aarav.Bishop@bsuredemo.com</div>
<div style="position:absolute;top:791px;font-size:16.5px;line-height:19.8px;font-weight:400;color:#252423;white-space:pre;letter-spacing:0.224px;left:541px;">8/10/2023</div>
<div style="position:absolute;top:791px;font-size:16.5px;line-height:19.8px;font-weight:400;color:#252423;white-space:pre;letter-spacing:0.295px;left:640.6px;">9/5/2023</div>
<div style="position:absolute;top:791px;font-size:16.5px;line-height:19.8px;font-weight:400;color:#252423;white-space:pre;letter-spacing:-0.416px;left:83.28px;width:800px;text-align:right;">515</div>
<div style="position:absolute;top:791px;font-size:16.5px;line-height:19.8px;font-weight:400;color:#252423;white-space:pre;letter-spacing:-0.195px;left:897.3px;">Aarav Bishop</div>
<div style="position:absolute;top:791px;font-size:16.5px;line-height:19.8px;font-weight:400;color:#252423;white-space:pre;letter-spacing:-0.025px;left:1091.9px;">On-premises</div>
<div style="position:absolute;top:791px;font-size:16.5px;line-height:19.8px;font-weight:400;color:#252423;white-space:pre;letter-spacing:-0.127px;left:1200.9px;">Stetson Wilson</div>
<div style="position:absolute;top:791px;font-size:16.5px;line-height:19.8px;font-weight:400;color:#252423;white-space:pre;letter-spacing:-0.632px;left:1341.7px;">France</div>
<div style="position:absolute;top:791px;font-size:16.5px;line-height:19.8px;font-weight:400;color:#252423;white-space:pre;letter-spacing:-0.211px;left:1451.2px;">Bsuredemo</div>
<div style="position:absolute;top:791px;font-size:16.5px;line-height:19.8px;font-weight:400;color:#252423;white-space:pre;letter-spacing:-0.451px;left:1560.6px;">Finance</div>
<div style="position:absolute;top:815px;font-size:16.5px;line-height:19.8px;font-weight:400;color:#252423;white-space:pre;letter-spacing:-0.050px;left:22.4px;">Aaron.Armstrong_icloud.com#EXT#@bsuredemo.onmicrosoft.com</div>
<div style="position:absolute;top:815px;font-size:16.5px;line-height:19.8px;font-weight:400;color:#252423;white-space:pre;letter-spacing:0.224px;left:541px;">10/3/2016</div>
<div style="position:absolute;top:815px;font-size:16.5px;line-height:19.8px;font-weight:400;color:#252423;white-space:pre;letter-spacing:0.295px;left:640.6px;">1/1/1970</div>
<div style="position:absolute;top:815px;font-size:16.5px;line-height:19.8px;font-weight:400;color:#252423;white-space:pre;letter-spacing:-0.348px;left:83.35px;width:800px;text-align:right;">20120</div>
<div style="position:absolute;top:815px;font-size:16.5px;line-height:19.8px;font-weight:400;color:#252423;white-space:pre;letter-spacing:0.213px;left:897.3px;">Aaron Armstrong</div>
<div style="position:absolute;top:815px;font-size:16.5px;line-height:19.8px;font-weight:400;color:#252423;white-space:pre;letter-spacing:0.119px;left:1091.9px;">Cloud</div>
<div style="position:absolute;top:815px;font-size:16.5px;line-height:19.8px;font-weight:400;color:#252423;white-space:pre;letter-spacing:-0.007px;left:1200.9px;">Missing Data</div>
<div style="position:absolute;top:815px;font-size:16.5px;line-height:19.8px;font-weight:400;color:#252423;white-space:pre;letter-spacing:-0.007px;left:1341.7px;">Missing Data</div>
<div style="position:absolute;top:815px;font-size:16.5px;line-height:19.8px;font-weight:400;color:#252423;white-space:pre;letter-spacing:-0.007px;left:1451.2px;">Missing Data</div>
<div style="position:absolute;top:815px;font-size:16.5px;line-height:19.8px;font-weight:400;color:#252423;white-space:pre;letter-spacing:-0.007px;left:1560.6px;">Missing Data</div>
<div style="position:absolute;left:16px;top:835.0px;width:1618px;height:23.5px;background:#ededed;"></div>
<div style="position:absolute;top:839px;font-size:16.5px;line-height:19.8px;font-weight:400;color:#252423;white-space:pre;letter-spacing:0.034px;left:22.4px;">Abdullah.Holland@bsuredemo.com</div>
<div style="position:absolute;top:839px;font-size:16.5px;line-height:19.8px;font-weight:400;color:#252423;white-space:pre;letter-spacing:0.224px;left:541px;">8/15/2024</div>
<div style="position:absolute;top:839px;font-size:16.5px;line-height:19.8px;font-weight:400;color:#252423;white-space:pre;letter-spacing:0.224px;left:640.6px;">1/24/2025</div>
<div style="position:absolute;top:839px;font-size:16.5px;line-height:19.8px;font-weight:400;color:#252423;white-space:pre;letter-spacing:-0.287px;left:83.41px;width:800px;text-align:right;">8</div>
<div style="position:absolute;top:839px;font-size:16.5px;line-height:19.8px;font-weight:400;color:#252423;white-space:pre;letter-spacing:0.202px;left:897.3px;">Abdullah Holland</div>
<div style="position:absolute;top:839px;font-size:16.5px;line-height:19.8px;font-weight:400;color:#252423;white-space:pre;letter-spacing:-0.025px;left:1091.9px;">On-premises</div>
<div style="position:absolute;top:839px;font-size:16.5px;line-height:19.8px;font-weight:400;color:#252423;white-space:pre;letter-spacing:-0.092px;left:1200.9px;">Daniella Dixon</div>
<div style="position:absolute;top:839px;font-size:16.5px;line-height:19.8px;font-weight:400;color:#252423;white-space:pre;letter-spacing:0.192px;left:1341.7px;">Norway</div>
<div style="position:absolute;top:839px;font-size:16.5px;line-height:19.8px;font-weight:400;color:#252423;white-space:pre;letter-spacing:-0.211px;left:1451.2px;">Bsuredemo</div>
<div style="position:absolute;top:839px;font-size:16.5px;line-height:19.8px;font-weight:400;color:#252423;white-space:pre;letter-spacing:0.231px;left:1560.6px;">Marketing</div>
<div style="position:absolute;top:862px;font-size:16.5px;line-height:19.8px;font-weight:400;color:#252423;white-space:pre;letter-spacing:-0.072px;left:22.4px;">Abdullah.Simon_gmail.com#EXT#@bsuredemo.onmicrosoft.com</div>
<div style="position:absolute;top:862px;font-size:16.5px;line-height:19.8px;font-weight:400;color:#252423;white-space:pre;letter-spacing:0.305px;left:541px;">11/23/2021</div>
<div style="position:absolute;top:862px;font-size:16.5px;line-height:19.8px;font-weight:400;color:#252423;white-space:pre;letter-spacing:0.295px;left:640.6px;">1/1/1970</div>
<div style="position:absolute;top:862px;font-size:16.5px;line-height:19.8px;font-weight:400;color:#252423;white-space:pre;letter-spacing:-0.348px;left:83.35px;width:800px;text-align:right;">20120</div>
<div style="position:absolute;top:862px;font-size:16.5px;line-height:19.8px;font-weight:400;color:#252423;white-space:pre;letter-spacing:0.125px;left:897.3px;">Abdullah Simon</div>
<div style="position:absolute;top:862px;font-size:16.5px;line-height:19.8px;font-weight:400;color:#252423;white-space:pre;letter-spacing:0.119px;left:1091.9px;">Cloud</div>
<div style="position:absolute;top:862px;font-size:16.5px;line-height:19.8px;font-weight:400;color:#252423;white-space:pre;letter-spacing:-0.007px;left:1200.9px;">Missing Data</div>
<div style="position:absolute;top:862px;font-size:16.5px;line-height:19.8px;font-weight:400;color:#252423;white-space:pre;letter-spacing:-0.007px;left:1341.7px;">Missing Data</div>
<div style="position:absolute;top:862px;font-size:16.5px;line-height:19.8px;font-weight:400;color:#252423;white-space:pre;letter-spacing:-0.007px;left:1451.2px;">Missing Data</div>
<div style="position:absolute;top:862px;font-size:16.5px;line-height:19.8px;font-weight:400;color:#252423;white-space:pre;letter-spacing:-0.007px;left:1560.6px;">Missing Data</div>
<div style="position:absolute;left:16px;top:882.4px;width:1618px;height:23.5px;background:#ededed;"></div>
<div style="position:absolute;top:886px;font-size:16.5px;line-height:19.8px;font-weight:400;color:#252423;white-space:pre;letter-spacing:-0.080px;left:22.4px;">Abigail.Bishop_icloud.com#EXT#@bsuredemo.onmicrosoft.com</div>
<div style="position:absolute;top:886px;font-size:16.5px;line-height:19.8px;font-weight:400;color:#252423;white-space:pre;letter-spacing:0.224px;left:541px;">3/13/2023</div>
<div style="position:absolute;top:886px;font-size:16.5px;line-height:19.8px;font-weight:400;color:#252423;white-space:pre;letter-spacing:0.295px;left:640.6px;">1/1/1970</div>
<div style="position:absolute;top:886px;font-size:16.5px;line-height:19.8px;font-weight:400;color:#252423;white-space:pre;letter-spacing:-0.348px;left:83.35px;width:800px;text-align:right;">20120</div>
<div style="position:absolute;top:886px;font-size:16.5px;line-height:19.8px;font-weight:400;color:#252423;white-space:pre;letter-spacing:0.086px;left:897.3px;">Abigail Bishop</div>
<div style="position:absolute;top:886px;font-size:16.5px;line-height:19.8px;font-weight:400;color:#252423;white-space:pre;letter-spacing:0.119px;left:1091.9px;">Cloud</div>
<div style="position:absolute;top:886px;font-size:16.5px;line-height:19.8px;font-weight:400;color:#252423;white-space:pre;letter-spacing:-0.007px;left:1200.9px;">Missing Data</div>
<div style="position:absolute;top:886px;font-size:16.5px;line-height:19.8px;font-weight:400;color:#252423;white-space:pre;letter-spacing:-0.007px;left:1341.7px;">Missing Data</div>
<div style="position:absolute;top:886px;font-size:16.5px;line-height:19.8px;font-weight:400;color:#252423;white-space:pre;letter-spacing:-0.007px;left:1451.2px;">Missing Data</div>
<div style="position:absolute;top:886px;font-size:16.5px;line-height:19.8px;font-weight:400;color:#252423;white-space:pre;letter-spacing:-0.007px;left:1560.6px;">Missing Data</div>
<div style="position:absolute;top:910px;font-size:16.5px;line-height:19.8px;font-weight:400;color:#252423;white-space:pre;letter-spacing:-0.066px;left:22.4px;">Abigail.Conway@bsuredemo.com</div>
<div style="position:absolute;top:910px;font-size:16.5px;line-height:19.8px;font-weight:400;color:#252423;white-space:pre;letter-spacing:0.295px;left:541px;">6/1/2021</div>
<div style="position:absolute;top:910px;font-size:16.5px;line-height:19.8px;font-weight:400;color:#252423;white-space:pre;letter-spacing:0.224px;left:640.6px;">1/29/2025</div>
<div style="position:absolute;top:910px;font-size:16.5px;line-height:19.8px;font-weight:400;color:#252423;white-space:pre;letter-spacing:-0.287px;left:83.41px;width:800px;text-align:right;">3</div>
<div style="position:absolute;top:910px;font-size:16.5px;line-height:19.8px;font-weight:400;color:#252423;white-space:pre;letter-spacing:0.020px;left:897.3px;">Abigail Conway</div>
<div style="position:absolute;top:910px;font-size:16.5px;line-height:19.8px;font-weight:400;color:#252423;white-space:pre;letter-spacing:-0.025px;left:1091.9px;">On-premises</div>
<div style="position:absolute;top:910px;font-size:16.5px;line-height:19.8px;font-weight:400;color:#252423;white-space:pre;letter-spacing:-0.112px;left:1200.9px;">Carson Mckinney</div>
<div style="position:absolute;top:910px;font-size:16.5px;line-height:19.8px;font-weight:400;color:#252423;white-space:pre;letter-spacing:0.192px;left:1341.7px;">Norway</div>
<div style="position:absolute;top:910px;font-size:16.5px;line-height:19.8px;font-weight:400;color:#252423;white-space:pre;letter-spacing:-0.211px;left:1451.2px;">Bsuredemo</div>
<div style="position:absolute;top:910px;font-size:16.5px;line-height:19.8px;font-weight:400;color:#252423;white-space:pre;letter-spacing:-0.396px;left:1560.6px;">Human Resources</div>
<div style="position:absolute;left:16px;top:929.8px;width:1618px;height:23.5px;background:#ededed;"></div>
<div style="position:absolute;top:933px;font-size:16.5px;line-height:19.8px;font-weight:400;color:#252423;white-space:pre;letter-spacing:-0.049px;left:22.4px;">Abigail.Cummings_hotmail.com#EXT#@bsuredemo.onmicrosoft.com</div>
<div style="position:absolute;top:933px;font-size:16.5px;line-height:19.8px;font-weight:400;color:#252423;white-space:pre;letter-spacing:0.305px;left:541px;">11/19/2019</div>
<div style="position:absolute;top:933px;font-size:16.5px;line-height:19.8px;font-weight:400;color:#252423;white-space:pre;letter-spacing:0.295px;left:640.6px;">3/7/2024</div>
<div style="position:absolute;top:933px;font-size:16.5px;line-height:19.8px;font-weight:400;color:#252423;white-space:pre;letter-spacing:-0.416px;left:83.28px;width:800px;text-align:right;">331</div>
<div style="position:absolute;top:933px;font-size:16.5px;line-height:19.8px;font-weight:400;color:#252423;white-space:pre;letter-spacing:0.115px;left:897.3px;">Abigail Cummings</div>
<div style="position:absolute;top:933px;font-size:16.5px;line-height:19.8px;font-weight:400;color:#252423;white-space:pre;letter-spacing:0.119px;left:1091.9px;">Cloud</div>
<div style="position:absolute;top:933px;font-size:16.5px;line-height:19.8px;font-weight:400;color:#252423;white-space:pre;letter-spacing:-0.007px;left:1200.9px;">Missing Data</div>
<div style="position:absolute;top:933px;font-size:16.5px;line-height:19.8px;font-weight:400;color:#252423;white-space:pre;letter-spacing:-0.007px;left:1341.7px;">Missing Data</div>
<div style="position:absolute;top:933px;font-size:16.5px;line-height:19.8px;font-weight:400;color:#252423;white-space:pre;letter-spacing:-0.007px;left:1451.2px;">Missing Data</div>
<div style="position:absolute;top:933px;font-size:16.5px;line-height:19.8px;font-weight:400;color:#252423;white-space:pre;letter-spacing:-0.007px;left:1560.6px;">Missing Data</div>
<div style="position:absolute;top:957px;font-size:16.5px;line-height:19.8px;font-weight:400;color:#252423;white-space:pre;letter-spacing:-0.120px;left:22.4px;">Abigail.Vasquez@bsuredemo.com</div>
<div style="position:absolute;top:957px;font-size:16.5px;line-height:19.8px;font-weight:400;color:#252423;white-space:pre;letter-spacing:0.224px;left:541px;">9/16/2022</div>
<div style="position:absolute;top:957px;font-size:16.5px;line-height:19.8px;font-weight:400;color:#252423;white-space:pre;letter-spacing:0.224px;left:640.6px;">1/13/2025</div>
<div style="position:absolute;top:957px;font-size:16.5px;line-height:19.8px;font-weight:400;color:#252423;white-space:pre;letter-spacing:-0.559px;left:83.14px;width:800px;text-align:right;">19</div>
<div style="position:absolute;top:957px;font-size:16.5px;line-height:19.8px;font-weight:400;color:#252423;white-space:pre;letter-spacing:-0.058px;left:897.3px;">Abigail Vasquez</div>
<div style="position:absolute;top:957px;font-size:16.5px;line-height:19.8px;font-weight:400;color:#252423;white-space:pre;letter-spacing:-0.025px;left:1091.9px;">On-premises</div>
<div style="position:absolute;top:957px;font-size:16.5px;line-height:19.8px;font-weight:400;color:#252423;white-space:pre;letter-spacing:-0.096px;left:1200.9px;">Taylor Watts</div>
<div style="position:absolute;top:957px;font-size:16.5px;line-height:19.8px;font-weight:400;color:#252423;white-space:pre;letter-spacing:0.192px;left:1341.7px;">Norway</div>
<div style="position:absolute;top:957px;font-size:16.5px;line-height:19.8px;font-weight:400;color:#252423;white-space:pre;letter-spacing:-0.211px;left:1451.2px;">Bsuredemo</div>
<div style="position:absolute;top:957px;font-size:16.5px;line-height:19.8px;font-weight:400;color:#252423;white-space:pre;letter-spacing:0.042px;left:1560.6px;">Operations</div>
<div style="position:absolute;left:16px;top:977.2px;width:1618px;height:23.5px;background:#ededed;"></div>
<div style="position:absolute;top:981px;font-size:16.5px;line-height:19.8px;font-weight:400;color:#252423;white-space:pre;letter-spacing:-0.041px;left:22.4px;">Abraham.Williamson@bsuredemo.com</div>
<div style="position:absolute;top:981px;font-size:16.5px;line-height:19.8px;font-weight:400;color:#252423;white-space:pre;letter-spacing:0.295px;left:541px;">6/7/2023</div>
<div style="position:absolute;top:981px;font-size:16.5px;line-height:19.8px;font-weight:400;color:#252423;white-space:pre;letter-spacing:0.295px;left:640.6px;">1/9/2025</div>
<div style="position:absolute;top:981px;font-size:16.5px;line-height:19.8px;font-weight:400;color:#252423;white-space:pre;letter-spacing:-0.559px;left:83.14px;width:800px;text-align:right;">23</div>
<div style="position:absolute;top:981px;font-size:16.5px;line-height:19.8px;font-weight:400;color:#252423;white-space:pre;letter-spacing:0.077px;left:897.3px;">Abraham Williamson</div>
<div style="position:absolute;top:981px;font-size:16.5px;line-height:19.8px;font-weight:400;color:#252423;white-space:pre;letter-spacing:0.119px;left:1091.9px;">Cloud</div>
<div style="position:absolute;top:981px;font-size:16.5px;line-height:19.8px;font-weight:400;color:#252423;white-space:pre;letter-spacing:-0.092px;left:1200.9px;">Daniella Dixon</div>
<div style="position:absolute;top:981px;font-size:16.5px;line-height:19.8px;font-weight:400;color:#252423;white-space:pre;letter-spacing:0.192px;left:1341.7px;">Norway</div>
<div style="position:absolute;top:981px;font-size:16.5px;line-height:19.8px;font-weight:400;color:#252423;white-space:pre;letter-spacing:-0.211px;left:1451.2px;">Bsuredemo</div>
<div style="position:absolute;top:981px;font-size:16.5px;line-height:19.8px;font-weight:400;color:#252423;white-space:pre;letter-spacing:0.231px;left:1560.6px;">Marketing</div>
<div style="position:absolute;top:1004px;font-size:16.5px;line-height:19.8px;font-weight:400;color:#252423;white-space:pre;letter-spacing:-0.089px;left:22.4px;">Abram.Roberts@bsuredemo.com</div>
<div style="position:absolute;top:1004px;font-size:16.5px;line-height:19.8px;font-weight:400;color:#252423;white-space:pre;letter-spacing:0.377px;left:541px;">8/11/2023</div>
<div style="position:absolute;top:1004px;font-size:16.5px;line-height:19.8px;font-weight:400;color:#252423;white-space:pre;letter-spacing:0.224px;left:640.6px;">1/27/2025</div>
<div style="position:absolute;top:1004px;font-size:16.5px;line-height:19.8px;font-weight:400;color:#252423;white-space:pre;letter-spacing:-0.287px;left:83.41px;width:800px;text-align:right;">5</div>
<div style="position:absolute;top:1004px;font-size:16.5px;line-height:19.8px;font-weight:400;color:#252423;white-space:pre;letter-spacing:-0.022px;left:897.3px;">Abram Roberts</div>
<div style="position:absolute;top:1004px;font-size:16.5px;line-height:19.8px;font-weight:400;color:#252423;white-space:pre;letter-spacing:-0.025px;left:1091.9px;">On-premises</div>
<div style="position:absolute;top:1004px;font-size:16.5px;line-height:19.8px;font-weight:400;color:#252423;white-space:pre;letter-spacing:-0.007px;left:1200.9px;">Missing Data</div>
<div style="position:absolute;top:1004px;font-size:16.5px;line-height:19.8px;font-weight:400;color:#252423;white-space:pre;letter-spacing:-0.007px;left:1341.7px;">Missing Data</div>
<div style="position:absolute;top:1004px;font-size:16.5px;line-height:19.8px;font-weight:400;color:#252423;white-space:pre;letter-spacing:-0.007px;left:1451.2px;">Missing Data</div>
<div style="position:absolute;top:1004px;font-size:16.5px;line-height:19.8px;font-weight:400;color:#252423;white-space:pre;letter-spacing:-0.007px;left:1560.6px;">Missing Data</div>
<div style="position:absolute;left:16px;top:1024.6px;width:1618px;height:23.5px;background:#ededed;"></div>
<div style="position:absolute;top:1028px;font-size:16.5px;line-height:19.8px;font-weight:400;color:#252423;white-space:pre;letter-spacing:-0.164px;left:22.4px;">Abram.Shah@bsuredemo.com</div>
<div style="position:absolute;top:1028px;font-size:16.5px;line-height:19.8px;font-weight:400;color:#252423;white-space:pre;letter-spacing:0.224px;left:541px;">8/15/2024</div>
<div style="position:absolute;top:1028px;font-size:16.5px;line-height:19.8px;font-weight:400;color:#252423;white-space:pre;letter-spacing:0.224px;left:640.6px;">1/28/2025</div>
<div style="position:absolute;top:1028px;font-size:16.5px;line-height:19.8px;font-weight:400;color:#252423;white-space:pre;letter-spacing:-0.287px;left:83.41px;width:800px;text-align:right;">4</div>
<div style="position:absolute;top:1028px;font-size:16.5px;line-height:19.8px;font-weight:400;color:#252423;white-space:pre;letter-spacing:-0.135px;left:897.3px;">Abram Shah</div>
<div style="position:absolute;top:1028px;font-size:16.5px;line-height:19.8px;font-weight:400;color:#252423;white-space:pre;letter-spacing:-0.025px;left:1091.9px;">On-premises</div>
<div style="position:absolute;top:1028px;font-size:16.5px;line-height:19.8px;font-weight:400;color:#252423;white-space:pre;letter-spacing:-0.166px;left:1200.9px;">Fiona Vaughn</div>
<div style="position:absolute;top:1028px;font-size:16.5px;line-height:19.8px;font-weight:400;color:#252423;white-space:pre;letter-spacing:0.192px;left:1341.7px;">Norway</div>
<div style="position:absolute;top:1028px;font-size:16.5px;line-height:19.8px;font-weight:400;color:#252423;white-space:pre;letter-spacing:-0.211px;left:1451.2px;">Bsuredemo</div>
<div style="position:absolute;top:1028px;font-size:16.5px;line-height:19.8px;font-weight:400;color:#252423;white-space:pre;letter-spacing:-0.451px;left:1560.6px;">Finance</div>
<div style="position:absolute;top:1052px;font-size:16.5px;line-height:19.8px;font-weight:400;color:#252423;white-space:pre;letter-spacing:-0.038px;left:22.4px;">Abram.Wilson@bsuredemo.com</div>
<div style="position:absolute;top:1052px;font-size:16.5px;line-height:19.8px;font-weight:400;color:#252423;white-space:pre;letter-spacing:0.295px;left:541px;">1/9/2024</div>
<div style="position:absolute;top:1052px;font-size:16.5px;line-height:19.8px;font-weight:400;color:#252423;white-space:pre;letter-spacing:0.224px;left:640.6px;">1/28/2025</div>
<div style="position:absolute;top:1052px;font-size:16.5px;line-height:19.8px;font-weight:400;color:#252423;white-space:pre;letter-spacing:-0.287px;left:83.41px;width:800px;text-align:right;">4</div>
<div style="position:absolute;top:1052px;font-size:16.5px;line-height:19.8px;font-weight:400;color:#252423;white-space:pre;letter-spacing:0.100px;left:897.3px;">Abram Wilson</div>
<div style="position:absolute;top:1052px;font-size:16.5px;line-height:19.8px;font-weight:400;color:#252423;white-space:pre;letter-spacing:0.119px;left:1091.9px;">Cloud</div>
<div style="position:absolute;top:1052px;font-size:16.5px;line-height:19.8px;font-weight:400;color:#252423;white-space:pre;letter-spacing:-0.166px;left:1200.9px;">Fiona Vaughn</div>
<div style="position:absolute;top:1052px;font-size:16.5px;line-height:19.8px;font-weight:400;color:#252423;white-space:pre;letter-spacing:0.192px;left:1341.7px;">Norway</div>
<div style="position:absolute;top:1052px;font-size:16.5px;line-height:19.8px;font-weight:400;color:#252423;white-space:pre;letter-spacing:-0.211px;left:1451.2px;">Bsuredemo</div>
<div style="position:absolute;top:1052px;font-size:16.5px;line-height:19.8px;font-weight:400;color:#252423;white-space:pre;letter-spacing:-0.451px;left:1560.6px;">Finance</div>
<div style="position:absolute;left:16px;top:1072.0px;width:1618px;height:23.5px;background:#ededed;"></div>
<div style="position:absolute;top:1076px;font-size:16.5px;line-height:19.8px;font-weight:400;color:#252423;white-space:pre;letter-spacing:-0.072px;left:22.4px;">Abram.Zamora@bsuredemo.com</div>
<div style="position:absolute;top:1076px;font-size:16.5px;line-height:19.8px;font-weight:400;color:#252423;white-space:pre;letter-spacing:0.224px;left:541px;">8/16/2023</div>
<div style="position:absolute;top:1076px;font-size:16.5px;line-height:19.8px;font-weight:400;color:#252423;white-space:pre;letter-spacing:0.224px;left:640.6px;">1/30/2025</div>
<div style="position:absolute;top:1076px;font-size:16.5px;line-height:19.8px;font-weight:400;color:#252423;white-space:pre;letter-spacing:-0.287px;left:83.41px;width:800px;text-align:right;">2</div>
<div style="position:absolute;top:1076px;font-size:16.5px;line-height:19.8px;font-weight:400;color:#252423;white-space:pre;letter-spacing:0.024px;left:897.3px;">Abram Zamora</div>
<div style="position:absolute;top:1076px;font-size:16.5px;line-height:19.8px;font-weight:400;color:#252423;white-space:pre;letter-spacing:-0.025px;left:1091.9px;">On-premises</div>
<div style="position:absolute;top:1076px;font-size:16.5px;line-height:19.8px;font-weight:400;color:#252423;white-space:pre;letter-spacing:-0.007px;left:1200.9px;">Missing Data</div>
<div style="position:absolute;top:1076px;font-size:16.5px;line-height:19.8px;font-weight:400;color:#252423;white-space:pre;letter-spacing:-0.007px;left:1341.7px;">Missing Data</div>
<div style="position:absolute;top:1076px;font-size:16.5px;line-height:19.8px;font-weight:400;color:#252423;white-space:pre;letter-spacing:-0.211px;left:1451.2px;">Bsuredemo</div>
<div style="position:absolute;top:1076px;font-size:16.5px;line-height:19.8px;font-weight:400;color:#252423;white-space:pre;letter-spacing:-1.070px;left:1560.6px;">Sales</div>
<div style="position:absolute;left:534px;top:682px;width:1px;height:420px;background:#d6d6d6;"></div>
<div style="position:absolute;left:633.4px;top:682px;width:1px;height:420px;background:#d6d6d6;"></div>
<div style="position:absolute;left:736px;top:682px;width:1px;height:420px;background:#d6d6d6;"></div>
<div style="position:absolute;left:890.4px;top:682px;width:1px;height:420px;background:#d6d6d6;"></div>
<div style="position:absolute;left:1085px;top:682px;width:1px;height:420px;background:#d6d6d6;"></div>
<div style="position:absolute;left:1193.5px;top:682px;width:1px;height:420px;background:#d6d6d6;"></div>
<div style="position:absolute;left:1334.3px;top:682px;width:1px;height:420px;background:#d6d6d6;"></div>
<div style="position:absolute;left:1444.2px;top:682px;width:1px;height:420px;background:#d6d6d6;"></div>
<div style="position:absolute;left:1553.7px;top:682px;width:1px;height:420px;background:#d6d6d6;"></div>
</div>
<div style="position:absolute;left:16.5px;top:1088.5px;width:336px;height:8px;background:#b9b9b9;border-radius:4px;"></div>
<div style="position:absolute;left:1635.8px;top:682px;width:7.6px;height:9.5px;background:#a6a6a6;border-radius:4px;"></div>
<div style="position:absolute;left:1665px;top:618px;width:311.5px;height:486px;background:#fff;border:1px solid #e5e5e5;border-radius:4px;box-sizing:border-box;"></div>
<div style="position:absolute;top:624px;font-size:19.5px;line-height:23.4px;font-weight:400;color:#1b1a19;white-space:pre;letter-spacing:0.417px;left:1674.3px;-webkit-text-stroke:0.55px #1b1a19;">Column Selector</div>
<div style="position:absolute;top:655px;font-size:16.5px;line-height:19.8px;font-weight:400;color:#1a2552;white-space:pre;letter-spacing:0.011px;left:1674.2px;">Select properties</div>
<div style="position:absolute;left:1666px;top:680.4px;width:309.5px;height:2px;background:#4aa682;"></div>
<div style="position:absolute;left:1684px;top:694px;width:17px;height:17px;border:1px solid #605e5c;box-sizing:border-box;background:#fff;"></div>
<div style="position:absolute;top:695px;font-size:16.5px;line-height:19.8px;font-weight:400;color:#252423;white-space:pre;letter-spacing:-0.195px;left:1710.4px;">Select all</div>
<div style="position:absolute;left:1684px;top:725px;width:17px;height:17px;border:1px solid #605e5c;box-sizing:border-box;background:#fff;"></div>
<div style="position:absolute;top:726px;font-size:16.5px;line-height:19.8px;font-weight:400;color:#252423;white-space:pre;letter-spacing:-0.301px;left:1710.4px;">Created</div>
<div style="position:absolute;left:1684px;top:757px;width:17px;height:17px;border:1px solid #605e5c;box-sizing:border-box;background:#fff;"></div>
<div style="position:absolute;top:758px;font-size:16.5px;line-height:19.8px;font-weight:400;color:#252423;white-space:pre;letter-spacing:-0.115px;left:1710.4px;">Last sign in</div>
<div style="position:absolute;left:1684px;top:788px;width:17px;height:17px;border:1px solid #605e5c;box-sizing:border-box;background:#fff;"></div>
<div style="position:absolute;top:789px;font-size:16.5px;line-height:19.8px;font-weight:400;color:#252423;white-space:pre;letter-spacing:-0.123px;left:1710.4px;">Days since sign-in</div>
<div style="position:absolute;left:1684px;top:819px;width:17px;height:17px;border:1px solid #605e5c;box-sizing:border-box;background:#fff;"></div>
<div style="position:absolute;top:820px;font-size:16.5px;line-height:19.8px;font-weight:400;color:#252423;white-space:pre;letter-spacing:-0.115px;left:1710.4px;">Display name</div>
<div style="position:absolute;left:1684px;top:850px;width:17px;height:17px;border:1px solid #605e5c;box-sizing:border-box;background:#fff;"></div>
<div style="position:absolute;top:851px;font-size:16.5px;line-height:19.8px;font-weight:400;color:#252423;white-space:pre;letter-spacing:-0.265px;left:1710.4px;">User source</div>
<div style="position:absolute;left:1684px;top:881px;width:17px;height:17px;border:1px solid #605e5c;box-sizing:border-box;background:#fff;"></div>
<div style="position:absolute;top:882px;font-size:16.5px;line-height:19.8px;font-weight:400;color:#252423;white-space:pre;letter-spacing:0.162px;left:1710.4px;">Manager</div>
<div style="position:absolute;left:1684px;top:913px;width:17px;height:17px;border:1px solid #605e5c;box-sizing:border-box;background:#fff;"></div>
<div style="position:absolute;top:913px;font-size:16.5px;line-height:19.8px;font-weight:400;color:#252423;white-space:pre;letter-spacing:0.270px;left:1710.4px;">Country</div>
<div style="position:absolute;left:1684px;top:944px;width:17px;height:17px;border:1px solid #605e5c;box-sizing:border-box;background:#fff;"></div>
<div style="position:absolute;top:944px;font-size:16.5px;line-height:19.8px;font-weight:400;color:#252423;white-space:pre;letter-spacing:-0.104px;left:1710.4px;">Company</div>
<div style="position:absolute;left:1684px;top:975px;width:17px;height:17px;border:1px solid #605e5c;box-sizing:border-box;background:#fff;"></div>
<div style="position:absolute;top:976px;font-size:16.5px;line-height:19.8px;font-weight:400;color:#252423;white-space:pre;letter-spacing:0.220px;left:1710.4px;">Department</div>
<div style="position:absolute;left:1684px;top:1006px;width:17px;height:17px;border:1px solid #605e5c;box-sizing:border-box;background:#fff;"></div>
<div style="position:absolute;top:1007px;font-size:16.5px;line-height:19.8px;font-weight:400;color:#252423;white-space:pre;letter-spacing:0.161px;left:1710.4px;">Office</div>
<div style="position:absolute;left:1684px;top:1037px;width:17px;height:17px;border:1px solid #605e5c;box-sizing:border-box;background:#fff;"></div>
<div style="position:absolute;top:1038px;font-size:16.5px;line-height:19.8px;font-weight:400;color:#252423;white-space:pre;letter-spacing:0.128px;left:1710.4px;">Job title</div>
<div style="position:absolute;left:1684px;top:1068px;width:17px;height:17px;border:1px solid #605e5c;box-sizing:border-box;background:#fff;"></div>
<div style="position:absolute;top:1069px;font-size:16.5px;line-height:19.8px;font-weight:400;color:#252423;white-space:pre;letter-spacing:-0.007px;left:1710.4px;">City</div>
<div style="position:absolute;left:1958.3px;top:688.3px;width:9.6px;height:121.5px;background:#8a8886;"></div>
<div style="position:absolute;left:2px;top:214px;width:1981px;height:396px;border:2px solid #ff0000;box-sizing:border-box;filter:drop-shadow(2px 2px 1.9px rgba(0,0,0,0.42));pointer-events:none;"></div>
</body></html>
